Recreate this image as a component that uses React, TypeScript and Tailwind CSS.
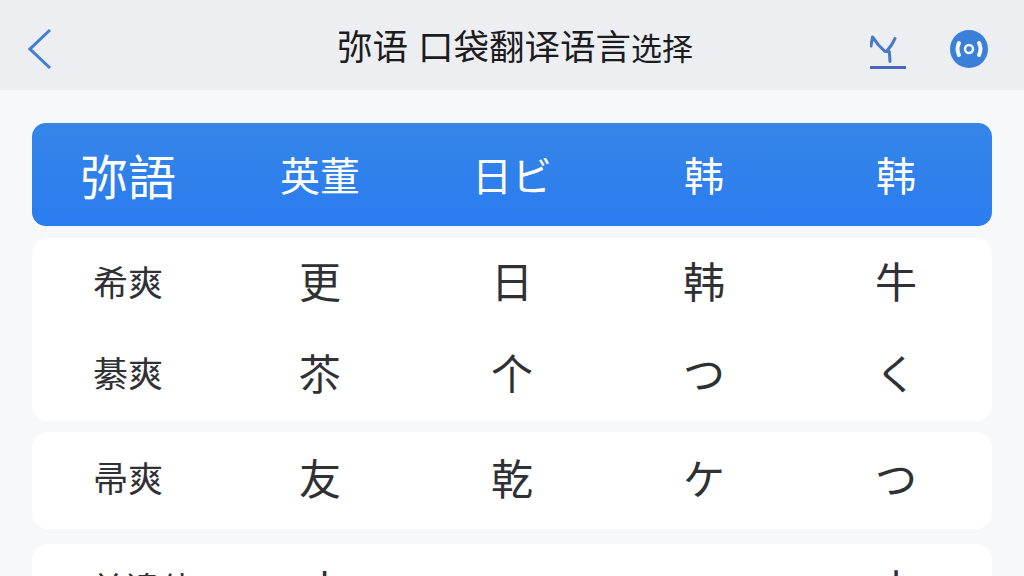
const HEADER_TABS = ["弥語", "英董", "日ビ", "韩", "韩"];

const GROUPS = [
  [
    ["希爽", "更", "日", "韩", "牛"],
    ["綦爽", "苶", "个", "つ", "く"],
  ],
  [["帚爽", "友", "乾", "ケ", "つ"]],
  [["单邊体", "丈", "", "", "十"]],
];

const Row = ({ cells, className }: { cells: string[]; className: string }) => (
  <div className={`grid grid-cols-5 items-center text-[#2f3134] ${className}`}>
    {cells.map((cell, index) => (
      <div
        key={index}
        className={`text-center ${index === 0 ? "text-[35px]" : "text-[42px]"} ${cell.length > 2 ? "pl-[30px] whitespace-nowrap" : ""}`}
      >
        {cell}
      </div>
    ))}
  </div>
);

const App = () => {
  return (
    <div className="w-[1024px] h-[576px] overflow-hidden bg-[#f7f8fa] font-['Liberation_Sans','Noto_Sans_CJK_SC',sans-serif]">
      <header className="flex items-center h-[90px] bg-[#eceef1] pt-[8px] pl-[28px] pr-[36px]">
        <svg width="24" height="42" viewBox="0 0 24 42" fill="none">
          <path d="M22 2 2 21l20 19" stroke="#3f7fd6" strokeWidth="3" />
        </svg>
        <h1 className="flex-1 ml-[108px] text-center text-[35.5px] text-[#1c1c1e] whitespace-nowrap">
          弥语 口袋翻译语言<span className="text-[31px]">选择</span>
        </h1>
        <svg width="38" height="38" viewBox="0 0 38 38" fill="none" className="mt-[6px] mr-[42px]">
          <path
            d="M1 13 2.500 4l6 8L15 18.500h4M25 5.500 21.500 12l-5 6.500M19.300 18.500 20 28.500"
            stroke="#4a78c8"
            strokeWidth="3"
            strokeLinecap="round"
            strokeLinejoin="round"
          />
          <rect x="0" y="33" width="36" height="3" fill="#4a68bd" />
        </svg>
        <svg width="38" height="38" viewBox="0 0 38 38" fill="none">
          <circle cx="19" cy="19" r="19" fill="#3a80d8" />
          <circle cx="19" cy="19" r="4" stroke="#f2f5f9" strokeWidth="2.500" />
          <path
            d="M9 13c-2 4-2 8 0 12M29 13c2 4 2 8 0 12"
            stroke="#f2f5f9"
            strokeWidth="4"
            strokeLinecap="round"
          />
        </svg>
      </header>

      <main className="flex flex-col px-[32px] pt-[33px]">
        <div className="grid grid-cols-5 items-center h-[103px] pt-[4px] rounded-[14px] bg-gradient-to-b from-[#3585e8] to-[#2b7cf0] text-white">
          {HEADER_TABS.map((tab, index) => (
            <div
              key={index}
              className={`text-center ${index === 0 ? "text-[48px] pt-[4px]" : "text-[40px]"}`}
            >
              {tab}
            </div>
          ))}
        </div>

        <section className="mt-[12px] h-[183px] rounded-[16px] bg-white flex flex-col">
          {GROUPS[0].map((cells, index) => (
            <Row key={index} cells={cells} className="h-[93px]" />
          ))}
        </section>
        <section className="mt-[11px] h-[97px] rounded-[16px] bg-white flex items-center">
          <Row cells={GROUPS[1][0]} className="w-full" />
        </section>
        <section className="mt-[15px] h-[97px] rounded-[16px] bg-white pt-[16px]">
          <Row cells={GROUPS[2][0]} className="w-full" />
        </section>
      </main>
    </div>
  );
};

export default App;
